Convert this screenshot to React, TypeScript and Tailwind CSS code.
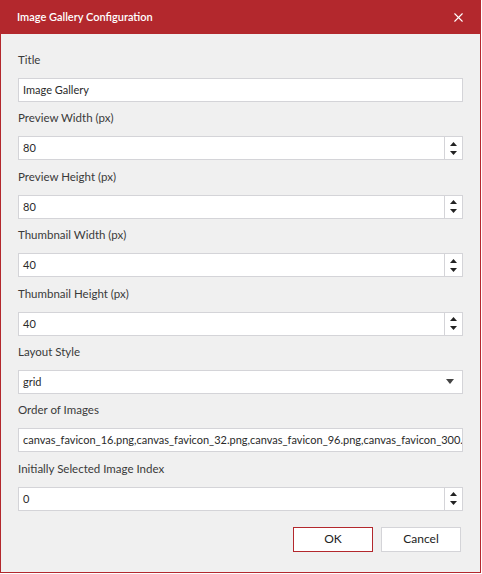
import { X } from "lucide-react"

const fields = [
  { label: "Title", value: "Image Gallery", kind: "text" },
  { label: "Preview Width (px)", value: "80", kind: "number" },
  { label: "Preview Height (px)", value: "80", kind: "number" },
  { label: "Thumbnail Width (px)", value: "40", kind: "number" },
  { label: "Thumbnail Height (px)", value: "40", kind: "number" },
  { label: "Layout Style", value: "grid", kind: "select" },
  {
    label: "Order of Images",
    value: "canvas_favicon_16.png,canvas_favicon_32.png,canvas_favicon_96.png,canvas_favicon_300.png",
    kind: "text",
  },
  { label: "Initially Selected Image Index", value: "0", kind: "number" },
]

function Spinner() {
  return (
    <div className="flex w-[18px] flex-col items-center justify-center gap-[5px] border-l border-[#d4d4d8]">
      <svg width="7" height="4" viewBox="0 0 7 4">
        <path d="M0 4 L3.5 0 L7 4 Z" fill="#222" />
      </svg>
      <svg width="7" height="4" viewBox="0 0 7 4">
        <path d="M0 0 L7 0 L3.5 4 Z" fill="#222" />
      </svg>
    </div>
  )
}

function Field({ label, value, kind }: { label: string; value: string; kind: string }) {
  return (
    <div className="mb-[8.4px]">
      <div className="h-[16px] text-[11.5px] leading-[16px] text-[#3a3a3a]">{label}</div>
      <div className="mt-[10px] flex h-[24px] border border-[#d4d4d8] bg-white">
        <div className="flex-1 overflow-hidden whitespace-nowrap pl-[4px] text-[11px] leading-[22px] text-[#2a2a2a]">
          {value}
        </div>
        {kind === "number" && <Spinner />}
        {kind === "select" && (
          <div className="flex w-[24px] items-center justify-center">
            <svg width="8" height="5" viewBox="0 0 8 5">
              <path d="M0 0 L8 0 L4 5 Z" fill="#444" />
            </svg>
          </div>
        )}
      </div>
    </div>
  )
}

export default function App() {
  return (
    <div
      className="h-[574px] w-[482px] bg-white"
      style={{ fontFamily: '"Segoe UI", Lato, "Noto Sans", sans-serif' }}
    >
      <div className="flex h-[573px] w-[481px] flex-col border border-t-0 border-[#b3282d] bg-[#f0f0f0]">
        {/* Header */}
        <div className="-mx-px flex h-[34px] items-center justify-between bg-[#b3282d] pl-[17px] pr-[15px]">
          <span className="text-[11px] font-semibold text-white">Image Gallery Configuration</span>
          <X className="h-[15px] w-[15px] text-white" strokeWidth={1.75} />
        </div>

        {/* Body */}
        <div className="px-[17px] pt-[18px]">
          {fields.map((f) => (
            <Field key={f.label} {...f} />
          ))}

          <div className="mt-[16px] flex justify-end gap-[8px] pr-[2px]">
            <button className="h-[25px] w-[80px] border border-[#b3282d] bg-white text-[12px] text-[#222]">
              OK
            </button>
            <button className="h-[25px] w-[80px] border border-[#d4d4d8] bg-white text-[12px] text-[#222]">
              Cancel
            </button>
          </div>
        </div>
      </div>
    </div>
  )
}
